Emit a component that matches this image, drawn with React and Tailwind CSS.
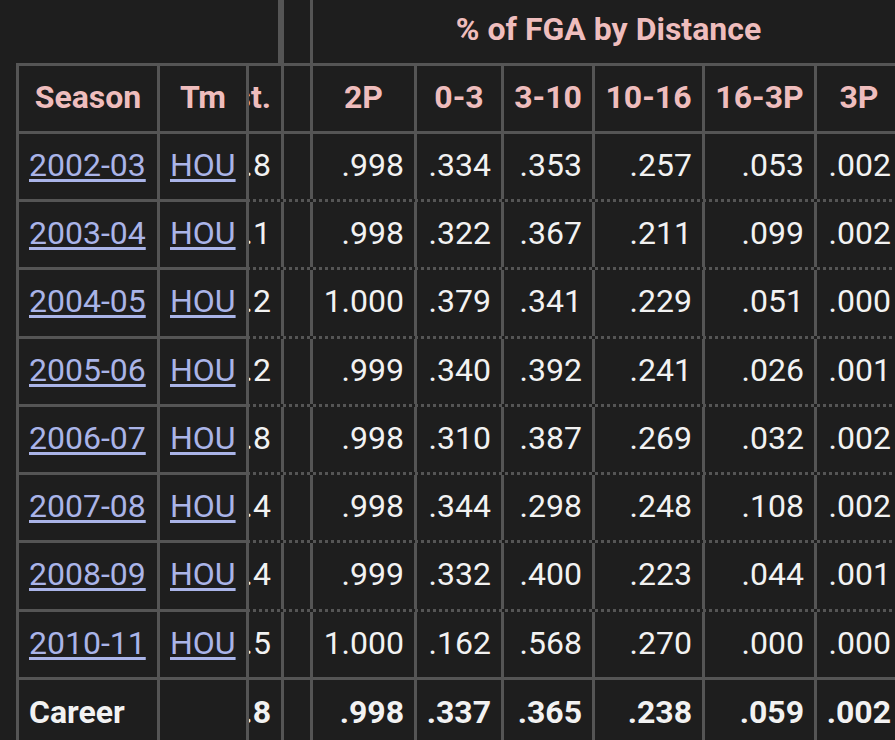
import React from "react";

const B = "border-[#555555]";

const rows = [
  { s: "2002-03", d: "10.8", v: [".998", ".334", ".353", ".257", ".053", ".002"], h: "h-[68px]" },
  { s: "2003-04", d: "11.1", v: [".998", ".322", ".367", ".211", ".099", ".002"], h: "h-[68px]" },
  { s: "2004-05", d: "10.2", v: ["1.000", ".379", ".341", ".229", ".051", ".000"], h: "h-[69px]" },
  { s: "2005-06", d: "10.2", v: [".999", ".340", ".392", ".241", ".026", ".001"], h: "h-[68px]" },
  { s: "2006-07", d: "9.8", v: [".998", ".310", ".387", ".269", ".032", ".002"], h: "h-[68px]" },
  { s: "2007-08", d: "10.4", v: [".998", ".344", ".298", ".248", ".108", ".002"], h: "h-[68px]" },
  { s: "2008-09", d: "10.4", v: [".999", ".332", ".400", ".223", ".044", ".001"], h: "h-[69px]" },
  { s: "2010-11", d: "10.5", v: ["1.000", ".162", ".568", ".270", ".000", ".000"], h: "h-[68px]", last: true },
];

const career = { d: "10.8", v: [".998", ".337", ".365", ".238", ".059", ".002"] };

const VW = ["w-[104px]", "w-[87px]", "w-[91px]", "w-[110px]", "w-[112px]", "w-[87px]"];
const HEAD = ["2P", "0-3", "3-10", "10-16", "16-3P", "3P"];

function Cell({ w, children, align = "end" }) {
  return (
    <div
      className={`${w} shrink-0 h-full flex items-center pb-[4px] ${
        align === "end" ? "justify-end pr-[10px]" : "justify-center"
      } border-r-[3px] ${B}`}
    >
      {children}
    </div>
  );
}

export default function App() {
  return (
    <div className="relative w-[895px] h-[740px] overflow-hidden bg-[#1e1e1e] font-['Roboto','Liberation_Sans',sans-serif] text-[32px] leading-none text-[#f2f2f2]">
      {/* underlying scrolled table */}
      <div className="flex flex-col w-[904px]">
        {/* over header */}
        <div className={`flex h-[66px] border-b-[3px] ${B}`}>
          <div className={`w-[284px] shrink-0 border-r-[6px] ${B}`} />
          <div className={`w-[29px] shrink-0 border-r-[3px] ${B}`} />
          <div className="flex-1 flex items-center justify-center pb-[6px] font-bold text-[#efbdbd]">
            % of FGA by Distance
          </div>
        </div>
        {/* header */}
        <div className={`flex h-[68px] border-b-[3px] border-solid ${B} font-bold text-[#efbdbd]`}>
          <Cell w="w-[284px]">Dist.</Cell>
          <Cell w="w-[29px]" />
          {HEAD.map((h, i) => (
            <Cell key={h} w={VW[i]} align="center">
              {h}
            </Cell>
          ))}
        </div>
        {rows.map((r) => (
          <div
            key={r.s}
            className={`flex ${r.h} border-b-[3px] ${r.last ? "border-solid" : "border-dotted"} ${B}`}
          >
            <Cell w="w-[284px]">{r.d}</Cell>
            <Cell w="w-[29px]" />
            {r.v.map((v, i) => (
              <Cell key={i} w={VW[i]}>
                {v}
              </Cell>
            ))}
          </div>
        ))}
        <div className="flex h-[68px] font-bold">
          <Cell w="w-[284px]">{career.d}</Cell>
          <Cell w="w-[29px]" />
          {career.v.map((v, i) => (
            <Cell key={i} w={VW[i]}>
              {v}
            </Cell>
          ))}
        </div>
      </div>

      {/* frozen columns overlay */}
      <div className="absolute left-0 top-[63px] bottom-0 w-[249px] bg-[#1e1e1e] pl-[16px]">
        <div className={`flex flex-col border-l-[3px] border-t-[3px] ${B}`}>
          <div className={`flex h-[68px] border-b-[3px] ${B} font-bold text-[#efbdbd]`}>
            <div className={`w-[141px] shrink-0 flex items-center justify-center pb-[4px] border-r-[3px] ${B}`}>
              Season
            </div>
            <div className={`w-[89px] shrink-0 flex items-center justify-center pb-[4px] border-r-[3px] ${B}`}>
              Tm
            </div>
          </div>
          {rows.map((r) => (
            <div key={r.s} className={`flex ${r.h} border-b-[3px] ${B}`}>
              <div className={`w-[141px] shrink-0 flex items-center pl-[10px] pb-[4px] border-r-[3px] ${B}`}>
                <a className="text-[#aab4e8] underline decoration-[3px] underline-offset-[3px]">{r.s}</a>
              </div>
              <div className={`w-[89px] shrink-0 flex items-center pl-[10px] pb-[4px] border-r-[3px] ${B}`}>
                <a className="text-[#aab4e8] underline decoration-[3px] underline-offset-[3px]">HOU</a>
              </div>
            </div>
          ))}
          <div className="flex h-[68px] font-bold">
            <div className={`w-[141px] shrink-0 flex items-center pl-[10px] pb-[4px] border-r-[3px] ${B}`}>
              Career
            </div>
            <div className={`w-[89px] shrink-0 border-r-[3px] ${B}`} />
          </div>
        </div>
      </div>
    </div>
  );
}
